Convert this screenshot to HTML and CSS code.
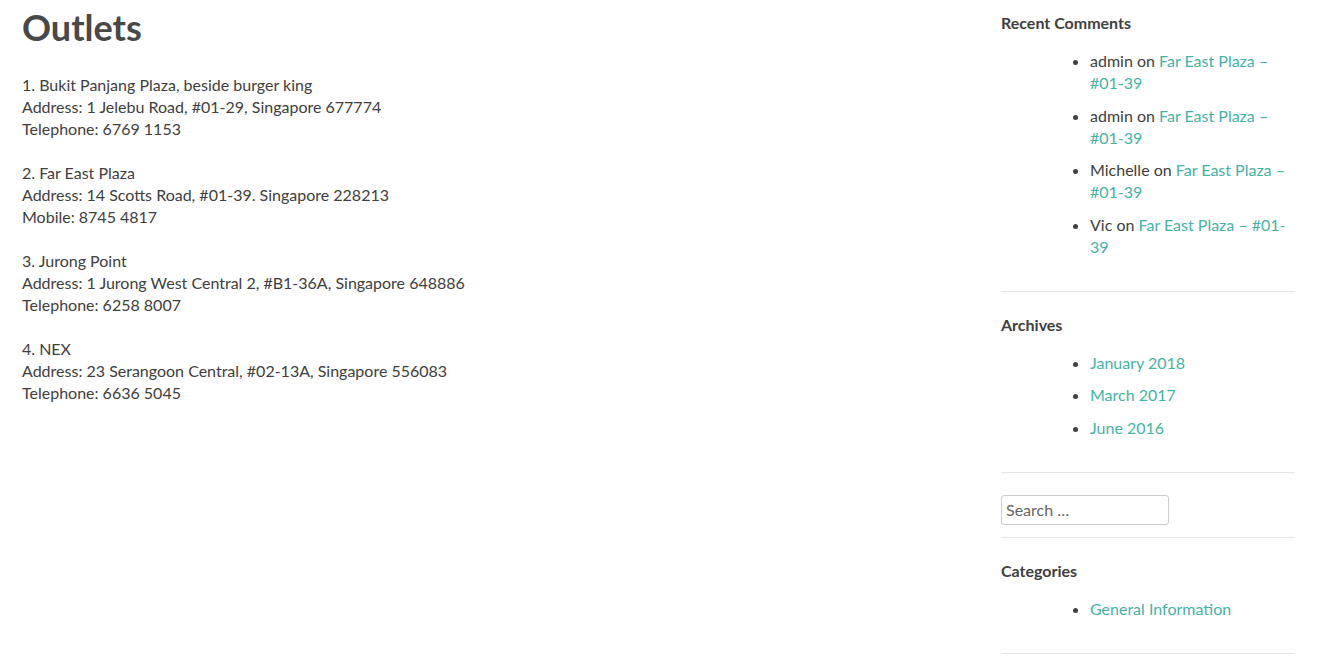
FILE: index.html
```html
<!DOCTYPE html>
<html lang="en">
<head>
  <meta charset="UTF-8" />
  <title>Outlets</title>
  <link rel="stylesheet" href="styles.css">
</head>
<body>

  <div class="page">
    <main class="content">
      <h1 class="page-title">Outlets</h1>

      <p>1. Bukit Panjang Plaza, beside burger king<br>
      Address: 1 Jelebu Road, #01-29, Singapore 677774<br>
      Telephone: 6769 1153</p>

      <p>2. Far East Plaza<br>
      Address: 14 Scotts Road, #01-39. Singapore 228213<br>
      Mobile: 8745 4817</p>

      <p>3. Jurong Point<br>
      Address: 1 Jurong West Central 2, #B1-36A, Singapore 648886<br>
      Telephone: 6258 8007</p>

      <p>4. NEX<br>
      Address: 23 Serangoon Central, #02-13A, Singapore 556083<br>
      Telephone: 6636 5045</p>
    </main>

    <aside class="sidebar">
      <section class="widget">
        <h2 class="widget-title">Recent Comments</h2>
        <ul>
          <li>admin on <a href="#">Far East Plaza – #01-39</a></li>
          <li>admin on <a href="#">Far East Plaza – #01-39</a></li>
          <li>Michelle on <a href="#">Far East Plaza – #01-39</a></li>
          <li>Vic on <a href="#">Far East Plaza – #01-39</a></li>
        </ul>
      </section>

      <section class="widget">
        <h2 class="widget-title">Archives</h2>
        <ul>
          <li><a href="#">January 2018</a></li>
          <li><a href="#">March 2017</a></li>
          <li><a href="#">June 2016</a></li>
        </ul>
      </section>

      <section class="widget widget-search">
        <form class="search-form">
          <input type="search" class="search-field" placeholder="Search …">
        </form>
      </section>

      <section class="widget">
        <h2 class="widget-title">Categories</h2>
        <ul>
          <li><a href="#">General Information</a></li>
        </ul>
      </section>
    </aside>
  </div>

</body>
</html>
```

FILE: styles.css
```css
* { margin:0; padding:0; box-sizing:border-box; }
body { font-family:'Lato','Open Sans',sans-serif; font-size:16px; line-height:22px; color:#404040; background:#fff; }
a { color:#45b3a4; text-decoration:none; }

.page { display:flex; justify-content:space-between; padding:0 39px 0 22px; }

/* main column */
.content { flex:1; }
.page-title { font-size:36px; font-weight:700; line-height:43px; color:#484848; padding-top:6px; margin-bottom:25px; }
.content p { margin-bottom:22px; }

/* sidebar */
.sidebar { width:294px; padding-top:12px; }
.widget { border-bottom:1px solid #e6e6e6; padding-bottom:12px; margin-bottom:22px; }
.widget-title { font-size:16px; font-weight:700; line-height:22px; color:#404040; margin-bottom:16px; }
.widget ul { list-style:disc; padding-left:89px; margin-bottom:21px; }
.widget li { margin-bottom:10.5px; }
.widget-search { padding-bottom:12px; }

.search-field {
  display:block; width:168px; height:30px; padding:3px 4px; font-family:inherit; font-size:16px; color:#404040;
  border:1px solid #ccc; border-radius:3px; outline:none;
}
.search-field::placeholder { color:#666; }
```
